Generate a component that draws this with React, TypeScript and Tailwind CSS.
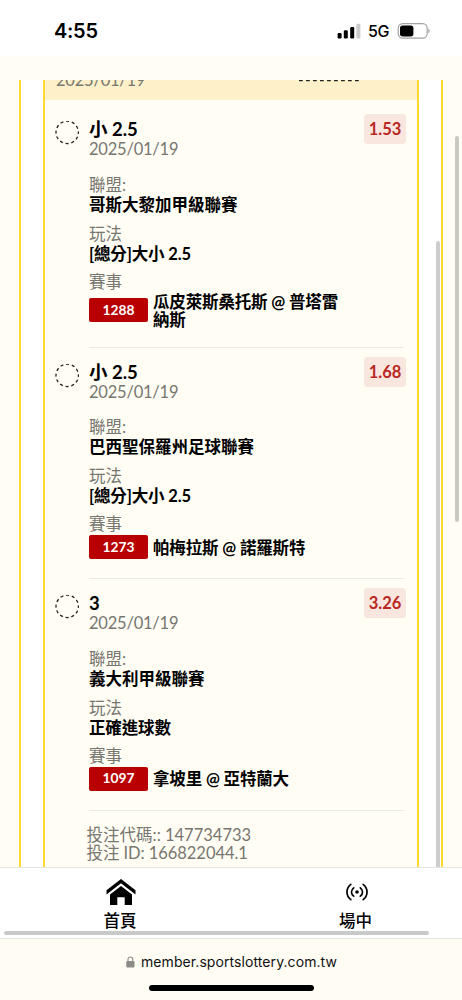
import React from "react";

type Bet = {
  title: string;
  date: string;
  odds: string;
  league: string;
  market: string;
  code: string;
  match: string[];
};

const bets: Bet[] = [
  {
    title: "小 2.5",
    date: "2025/01/19",
    odds: "1.53",
    league: "哥斯大黎加甲級聯賽",
    market: "[總分]大小 2.5",
    code: "1288",
    match: ["瓜皮萊斯桑托斯 @ 普塔雷", "納斯"],
  },
  {
    title: "小 2.5",
    date: "2025/01/19",
    odds: "1.68",
    league: "巴西聖保羅州足球聯賽",
    market: "[總分]大小 2.5",
    code: "1273",
    match: ["帕梅拉斯 @ 諾羅斯特"],
  },
  {
    title: "3",
    date: "2025/01/19",
    odds: "3.26",
    league: "義大利甲級聯賽",
    market: "正確進球數",
    code: "1097",
    match: ["拿坡里 @ 亞特蘭大"],
  },
];

function StatusBar() {
  return (
    <header className="flex h-14 shrink-0 items-start justify-between bg-white pl-[54px] pr-[31px] font-['Inter','Liberation_Sans',sans-serif]">
      <div className="mt-[19px] text-[20px] font-semibold leading-6 tracking-[-0.3px] text-black">4:55</div>
      <div className="mt-[19px] flex h-6 items-center">
        <svg width="24" height="16" viewBox="0 0 24 16">
          <rect x="0.6" y="10" width="4" height="5.5" rx="1.2" />
          <rect x="6.8" y="7.3" width="4" height="8.2" rx="1.2" />
          <rect x="13.2" y="4" width="4" height="11.5" rx="1.2" />
          <rect x="19.4" y="0.7" width="4" height="14.8" rx="1.2" fill="#cccccc" />
        </svg>
        <span className="ml-[7px] w-[22px] whitespace-nowrap text-[16px] font-medium tracking-[-0.3px]">5G</span>
        <svg className="ml-[7px]" width="34" height="18" viewBox="0 0 34 18">
          <rect x="1.2" y="1.6" width="29" height="14.6" rx="4.6" fill="none" stroke="#a3a3a3" strokeWidth="1.2" />
          <rect x="3" y="3.6" width="13.4" height="10.8" rx="2.6" />
          <path d="M31.4 6.6c1.7.6 1.7 4 0 4.6z" fill="#a3a3a3" />
        </svg>
      </div>
    </header>
  );
}

function DashedCircle() {
  return (
    <svg className="mt-[2px] shrink-0" width="24" height="24" viewBox="0 0 24 24" fill="none" stroke="#222" strokeWidth="1.3">
      <circle cx="12.2" cy="11.4" r="11.2" strokeDasharray="3.1 2.765" strokeDashoffset="1.5" />
    </svg>
  );
}

function Label({ children }: { children: React.ReactNode }) {
  return <div className="h-5 whitespace-nowrap leading-5 text-[#777670]">{children}</div>;
}

function Value({ children }: { children: React.ReactNode }) {
  return <div className="h-5 whitespace-nowrap font-bold leading-5 text-black">{children}</div>;
}

function BetRow({ bet }: { bet: Bet }) {
  return (
    <article className="flex pl-[10px] pr-[13px] text-[16.5px]">
      <DashedCircle />
      <div className="ml-[10px] flex-1 border-b-[1.5px] border-[#ebe9e4] pb-[18px]">
        <div className="flex h-[40.5px] justify-between">
          <div>
            <div className="h-5 whitespace-nowrap text-[18.5px] font-bold leading-5 text-black">{bet.title}</div>
            <div className="h-5 whitespace-nowrap leading-[21px] tracking-[-0.22px] text-[#777670]">{bet.date}</div>
          </div>
          <div className="-mr-[2px] -mt-[5px] flex h-[30px] w-[42px] items-center justify-center rounded-[4px] bg-[#f8e6df] pt-px font-bold text-[#b9281f]">
            {bet.odds}
          </div>
        </div>
        <div className="mt-[15px] flex flex-col gap-[9px]">
          <div>
            <Label>聯盟:</Label>
            <Value>{bet.league}</Value>
          </div>
          <div>
            <Label>玩法</Label>
            <Value>
              <span className="tracking-[-0.15px]">{bet.market}</span>
            </Value>
          </div>
          <div className="-mt-px">
            <Label>賽事</Label>
            <div className="flex min-h-[26px] items-center">
              <div className="flex h-6 w-[59px] shrink-0 items-center justify-center rounded-[2px] bg-[#b90000] text-[13.8px] font-bold text-white">
                {bet.code}
              </div>
              <div className="ml-[5px] pt-px font-bold tracking-[-0.15px] text-black">
                {bet.match.map((line) => (
                  <div key={line} className="h-[18px] whitespace-nowrap leading-[18px]">{line}</div>
                ))}
              </div>
            </div>
          </div>
        </div>
      </div>
    </article>
  );
}

function BetPanel() {
  return (
    <main className="relative h-[787px] shrink-0 overflow-hidden px-[19px]">
      <div className="h-full border-x-2 border-[#ffd92f] bg-white px-[22px]">
        <div className="h-full overflow-hidden border-x-2 border-[#ffd92f] bg-[#fffdf4]">
          <div className="flex h-5 items-start justify-between overflow-hidden bg-[#fef1c9] pl-[11px] pr-[57px]">
            <div className="-mt-[10px] text-[16.5px] leading-5 tracking-[-0.22px] text-[#777670]">2025/01/19</div>
            <svg width="62" height="2" viewBox="0 0 62 2">
              <path d="M1 .6h60" stroke="#222" strokeWidth="1.4" strokeDasharray="3.8 3.2" />
            </svg>
          </div>
          <div className="flex flex-col gap-[14px] pt-[19.3px]">
            {bets.map((bet) => (
              <BetRow key={bet.code} bet={bet} />
            ))}
          </div>
          <div className="ml-[41.5px] mt-[15px] text-[16.5px] leading-[18px] text-[#777670]">
            <div className="h-[18px] whitespace-nowrap">投注代碼:: 147734733</div>
            <div className="h-[18px] whitespace-nowrap tracking-[-0.06px]">投注 ID: 166822044.1</div>
          </div>
        </div>
      </div>
      <div className="absolute right-[22px] top-[161px] h-[640px] w-[4px] rounded-full bg-[#cdcdcf]" />
      <div className="absolute right-[3px] top-[56px] h-[386px] w-[4px] rounded-full bg-[#c9c8c1]" />
    </main>
  );
}

function BottomNav() {
  return (
    <nav className="relative flex h-[72px] shrink-0 border-y border-[#e5e5e3] bg-white text-[16.5px] font-medium text-black">
      <div className="flex w-[240px] shrink-0 flex-col items-center pt-[11px]">
        <svg className="ml-[2px]" width="30" height="27" viewBox="0 0 30 27">
          <path d="M15 0 29.5 11.3v4.2L15 4.2.5 15.5v-4.2z" />
          <path d="M15 7 26 15.5V26h-7.3v-7.8h-7.4V26H4V15.5z" />
        </svg>
        <span className="mt-[5px] leading-5">首頁</span>
      </div>
      <div className="flex w-[231px] shrink-0 flex-col items-center pt-[13px]">
        <svg className="ml-[2px]" width="24" height="22" viewBox="0 0 24 22" fill="none" stroke="#000" strokeWidth="1.7" strokeLinecap="round">
          <path d="M5.8 3.3C.7 7.3.7 14.7 5.8 18.7M18.2 3.3c5.1 4 5.1 11.4 0 15.4M8.7 6.8c-3 2.4-3 6 0 8.4M15.3 6.8c3 2.4 3 6 0 8.4" />
          <circle cx="12" cy="11" r="1.8" fill="#000" stroke="none" />
        </svg>
        <span className="mt-[8px] leading-5">場中</span>
      </div>
      <div className="absolute bottom-[3px] left-1 h-[4px] w-[425px] rounded-full bg-[#c8c9c9]" />
    </nav>
  );
}

function AddressBar() {
  return (
    <footer className="flex flex-1 flex-col items-center bg-[#fffcf4] font-['Inter','Liberation_Sans',sans-serif]">
      <div className="mt-[13px] flex h-5 items-center">
        <svg className="ml-px" width="9" height="12" viewBox="0 0 9 12">
          <rect x="0.3" y="5" width="8.2" height="6.5" rx="1.2" fill="#8b8a86" />
          <path d="M2 5.5V3.4a2.4 2.4 0 0 1 4.8 0v2.1" fill="none" stroke="#8b8a86" strokeWidth="1.1" />
        </svg>
        <span className="ml-[6px] text-[14px] leading-5 tracking-[0.08px] text-[#111]">member.sportslottery.com.tw</span>
      </div>
      <div className="mt-[13px] h-[6px] w-[165px] rounded-full bg-black" />
    </footer>
  );
}

export default function App() {
  return (
    <div className="flex h-[1000px] w-[462px] flex-col overflow-hidden bg-[#fffdf4] font-['Lato','Noto_Sans_CJK_TC',sans-serif]">
      <StatusBar />
      <div className="h-6 shrink-0" />
      <BetPanel />
      <BottomNav />
      <AddressBar />
    </div>
  );
}
